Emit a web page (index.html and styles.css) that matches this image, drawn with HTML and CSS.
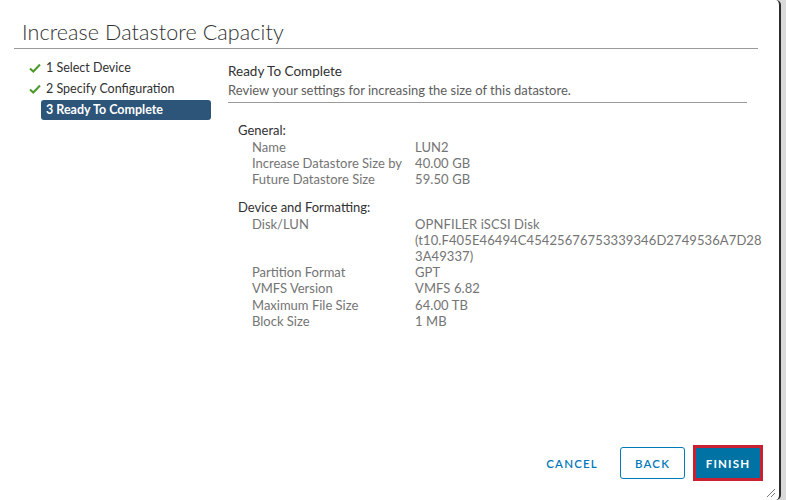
FILE: index.html
```html
<!DOCTYPE html>
<html lang="en">
<head>
    <meta charset="UTF-8">
    <title>Increase Datastore Capacity</title>
    <link rel="stylesheet" href="styles.css">
</head>
<body>
    <div class="modal">
        <div class="modal-header">
            <h1>Increase Datastore Capacity</h1>
        </div>
        <div class="modal-body">
            <ul class="steps">
                <li class="done">
                    <svg class="check" viewBox="0 0 12 10" width="12" height="10"><path d="M1 5.5 L4.3 8.5 L11 1.5" fill="none" stroke="#4c9a2a" stroke-width="2"/></svg>
                    1 Select Device
                </li>
                <li class="done">
                    <svg class="check" viewBox="0 0 12 10" width="12" height="10"><path d="M1 5.5 L4.3 8.5 L11 1.5" fill="none" stroke="#4c9a2a" stroke-width="2"/></svg>
                    2 Specify Configuration
                </li>
                <li class="active">3 Ready To Complete</li>
            </ul>
            <div class="page">
                <div class="page-title">Ready To Complete</div>
                <div class="page-desc">Review your settings for increasing the size of this datastore.</div>
                <div class="summary">
                    <div class="section-title">General:</div>
                    <div class="row"><span class="label">Name</span><span class="value">LUN2</span></div>
                    <div class="row"><span class="label">Increase Datastore Size by</span><span class="value">40.00 GB</span></div>
                    <div class="row"><span class="label">Future Datastore Size</span><span class="value">59.50 GB</span></div>

                    <div class="section-title second">Device and Formatting:</div>
                    <div class="row"><span class="label">Disk/LUN</span><span class="value">OPNFILER iSCSI Disk<br>(t10.F405E46494C45425676753339346D2749536A7D28<br>3A49337)</span></div>
                    <div class="row"><span class="label">Partition Format</span><span class="value">GPT</span></div>
                    <div class="row"><span class="label">VMFS Version</span><span class="value">VMFS 6.82</span></div>
                    <div class="row"><span class="label">Maximum File Size</span><span class="value">64.00 TB</span></div>
                    <div class="row"><span class="label">Block Size</span><span class="value">1 MB</span></div>
                </div>
            </div>
        </div>
        <div class="modal-footer">
            <button class="btn btn-link">CANCEL</button>
            <button class="btn btn-outline">BACK</button>
            <button class="btn btn-primary">FINISH</button>
        </div>
        <div class="grip"></div>
    </div>
</body>
</html>
```

FILE: styles.css
```css
body {
    margin: 0;
    background-color: #d9d9d9;
    font-family: 'Lato', 'Noto Sans', sans-serif;
    color: #565656;
}

.modal {
    position: relative;
    width: 781px;
    height: 500px;
    background-color: #fff;
    border-right: 2px solid #2b2b2b;
    border-radius: 0 5px 5px 0;
    display: flex;
    flex-direction: column;
    box-sizing: border-box;
}

.modal-header {
    margin: 0 21px 0 14px;
    padding: 19px 0 0 8px;
    border-bottom: 1px solid #9a9a9a;
    height: 29px;
}

.modal-header h1 {
    margin: 0;
    font-weight: 300;
    font-size: 21.5px;
    line-height: 26px;
    color: #313131;
    letter-spacing: 0.1px;
}

.modal-body {
    display: flex;
    flex: 1;
    padding-top: 9px;
}

.steps {
    list-style: none;
    margin: 0 0 0 29px;
    padding: 0;
    width: 182px;
}

.steps li {
    font-size: 12.5px;
    line-height: 20px;
    height: 20px;
    color: #313131;
    display: flex;
    align-items: center;
    margin-bottom: 1px;
}

.check {
    margin-right: 5px;
}

.steps li.active {
    margin-left: 12px;
    background-color: #2d5479;
    color: #fff;
    font-weight: 700;
    border-radius: 3px;
    padding-left: 5px;
}

.page {
    margin-left: 17px;
    width: 519px;
}

.page-title {
    font-size: 13.5px;
    color: #313131;
    line-height: 18px;
    margin-top: 4px;
}

.page-desc {
    font-size: 13px;
    line-height: 20px;
    color: #5e5e5e;
    padding-bottom: 2px;
    border-bottom: 1px solid #9a9a9a;
}

.summary {
    padding: 18px 0 0 10px;
    font-size: 13px;
}

.section-title {
    color: #313131;
    line-height: 18px;
}

.section-title.second {
    margin-top: 10px;
}

.row {
    display: flex;
    line-height: 16.2px;
    color: #747474;
}

.label {
    width: 163px;
    padding-left: 14px;
    flex-shrink: 0;
}

.value {
    white-space: nowrap;
    letter-spacing: 0.1px;
}

.modal-footer {
    display: flex;
    justify-content: flex-end;
    align-items: center;
    padding: 0 17px 20px 0;
}

.btn {
    font-family: 'Lato', 'Noto Sans', sans-serif;
    font-size: 11.5px;
    font-weight: 600;
    letter-spacing: 1.2px;
    height: 32px;
    border-radius: 3px;
    cursor: pointer;
    box-sizing: border-box;
}

.btn-link {
    background: none;
    border: none;
    color: #0079b8;
    padding: 0 12px;
    margin-right: 10px;
}

.btn-outline {
    background: #fff;
    border: 1px solid #0079b8;
    color: #0079b8;
    width: 65px;
    margin-right: 9px;
}

.btn-primary {
    background-color: #0072a3;
    color: #fff;
    border: 2px solid #c92032;
    outline: 1px solid #c92032;
    width: 68px;
    height: 34px;
    font-weight: 700;
    border-radius: 0;
}

.grip {
    position: absolute;
    right: 4px;
    bottom: 3px;
    width: 8px;
    height: 8px;
    background: linear-gradient(135deg, transparent 45%, #777 45%, #777 55%, transparent 55%, transparent 70%, #777 70%, #777 80%, transparent 80%);
}
```
